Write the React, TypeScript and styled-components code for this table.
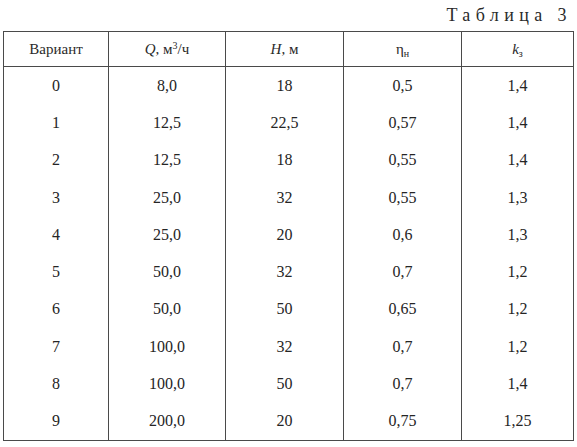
import React from 'react';
import styled, { createGlobalStyle } from 'styled-components';

const GlobalStyle = createGlobalStyle`
  html, body {
    margin: 0;
    padding: 0;
    background: #ffffff;
  }
  body {
    font-family: "Liberation Serif", "DejaVu Serif", serif;
    color: #252525;
  }
`;

const Page = styled.div`
  width: 577px;
  height: 447px;
  padding: 0 3px 0 3px;
  box-sizing: border-box;
  overflow: hidden;
`;

const Caption = styled.div`
  height: 31px;
  display: flex;
  align-items: center;
  justify-content: flex-end;
  padding-right: 2px;
  font-size: 18px;
  letter-spacing: 5.4px;
  color: #2a2a2a;
`;

const Table = styled.table`
  width: 566px;
  border-collapse: collapse;
  table-layout: fixed;
`;

const HeadCell = styled.th<{ $w: number }>`
  width: ${p => p.$w}px;
  height: 34px;
  padding: 0;
  border: 1px solid #4a4a4a;
  font-weight: normal;
  font-size: 15px;
  text-align: center;
  vertical-align: middle;
  color: #2a2a2a;
`;

const Cell = styled.td`
  height: 37.3px;
  padding: 0;
  border-left: 1px solid #4a4a4a;
  border-right: 1px solid #4a4a4a;
  font-size: 16px;
  text-align: center;
  vertical-align: middle;
  color: #252525;
`;

const Row = styled.tr<{ $last?: boolean }>`
  td {
    border-bottom: ${p => (p.$last ? '1px solid #4a4a4a' : 'none')};
  }
`;

const Ital = styled.i`
  font-style: italic;
`;

const Sup = styled.sup`
  font-size: 10px;
  vertical-align: 5px;
  line-height: 0;
`;

const Sub = styled.sub`
  font-size: 10px;
  vertical-align: -3px;
  line-height: 0;
`;

const widths = [104, 116, 117, 117, 111];

const rows: string[][] = [
  ['0', '8,0', '18', '0,5', '1,4'],
  ['1', '12,5', '22,5', '0,57', '1,4'],
  ['2', '12,5', '18', '0,55', '1,4'],
  ['3', '25,0', '32', '0,55', '1,3'],
  ['4', '25,0', '20', '0,6', '1,3'],
  ['5', '50,0', '32', '0,7', '1,2'],
  ['6', '50,0', '50', '0,65', '1,2'],
  ['7', '100,0', '32', '0,7', '1,2'],
  ['8', '100,0', '50', '0,7', '1,4'],
  ['9', '200,0', '20', '0,75', '1,25'],
];

const App: React.FC = () => {
  return (
    <Page>
      <GlobalStyle />
      <Caption>Таблица 3</Caption>
      <Table>
        <thead>
          <tr>
            <HeadCell $w={widths[0]}>Вариант</HeadCell>
            <HeadCell $w={widths[1]}>
              <Ital>Q</Ital>, м<Sup>3</Sup>/ч
            </HeadCell>
            <HeadCell $w={widths[2]}>
              <Ital>H</Ital>, м
            </HeadCell>
            <HeadCell $w={widths[3]}>
              η<Sub>н</Sub>
            </HeadCell>
            <HeadCell $w={widths[4]}>
              <Ital>k</Ital>
              <Sub>з</Sub>
            </HeadCell>
          </tr>
        </thead>
        <tbody>
          {rows.map((r, i) => (
            <Row key={r[0]} $last={i === rows.length - 1}>
              {r.map((v, j) => (
                <Cell key={j}>{v}</Cell>
              ))}
            </Row>
          ))}
        </tbody>
      </Table>
    </Page>
  );
};

export default App;
